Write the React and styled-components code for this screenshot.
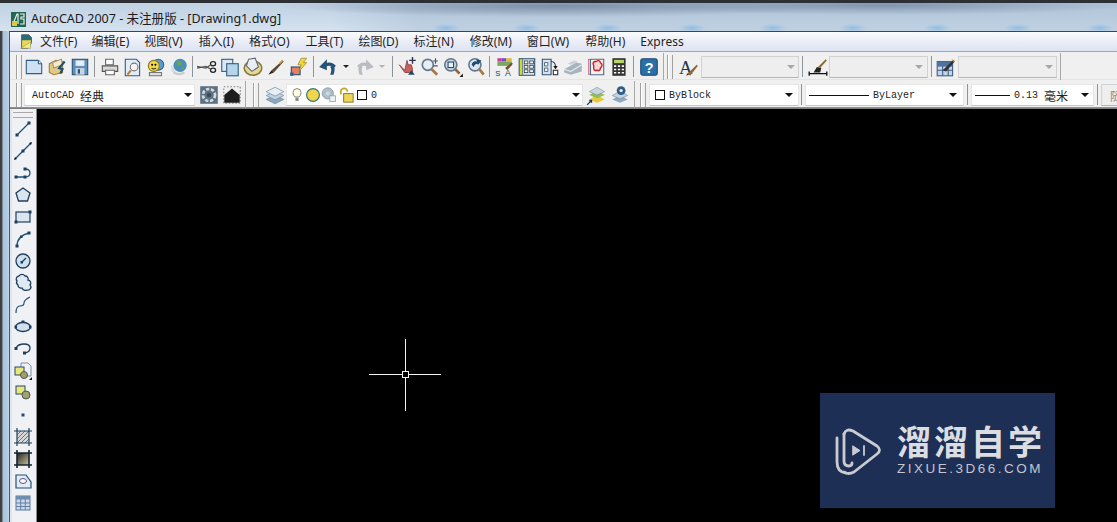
import React from "react";
import styled, { createGlobalStyle } from "styled-components";

const Global = createGlobalStyle`
  html, body { margin: 0; padding: 0; background: #000; overflow: hidden; }
  * { box-sizing: border-box; }
`;

const Window = styled.div`
  width: 1117px; height: 522px; overflow: hidden; display: flex; flex-direction: column;
  background: linear-gradient(90deg, #3a3a3c 0, #4a4a4c 2px, #a9c3dc 3px, #b4cde6 8px, #c3d6e6 9px);
  font-family: "Noto Sans", "Noto Sans CJK SC", sans-serif;
`;
const TitleBar = styled.div`
  height: 31px; flex: none; display: flex; align-items: center; gap: 5px; padding: 4px 0 0 11px;
  border-top: 3px solid #2c2f33;
  background:
    radial-gradient(ellipse 14px 4px at 446px 25px, #8fbde6 0, transparent 100%),
    radial-gradient(ellipse 14px 4px at 527px 25px, #8fbde6 0, transparent 100%),
    radial-gradient(ellipse 14px 4px at 608px 25px, #8fbde6 0, transparent 100%),
    radial-gradient(ellipse 14px 4px at 692px 25px, #8fbde6 0, transparent 100%),
    radial-gradient(ellipse 14px 4px at 773px 25px, #8fbde6 0, transparent 100%),
    radial-gradient(ellipse 14px 4px at 853px 25px, #8fbde6 0, transparent 100%),
    radial-gradient(ellipse 14px 4px at 937px 25px, #8fbde6 0, transparent 100%),
    radial-gradient(ellipse 14px 4px at 1018px 25px, #8fbde6 0, transparent 100%),
    radial-gradient(ellipse 14px 4px at 1100px 25px, #8fbde6 0, transparent 100%),
    radial-gradient(ellipse 280px 11px at 560px 3px, #7b90a9 0, transparent 100%),
    radial-gradient(ellipse 260px 10px at 880px 2px, #7f95ae 0, transparent 100%),
    linear-gradient(90deg, transparent 0, transparent 330px, rgba(150,175,200,.35) 420px, rgba(150,175,200,.35) 100%),
    linear-gradient(180deg, #c0d1e3 0, #c8d8e8 45%, #d6e3ef 100%);
`;
const TitleText = styled.span`
  font-size: 12.55px; color: #1c1c1c; white-space: nowrap; line-height: 1;
`;
const AppLogo = styled.svg`
  width: 15px; height: 15px; flex: none;
`;
const Frame = styled.div`
  margin-left: 9px; flex: 1; min-height: 0; display: flex; flex-direction: column;
  border-left: 1px solid #50565e; border-top: 1px solid #3d4650; background: #f0f0f0;
`;
const MenuBar = styled.div`
  height: 20px; flex: none; display: flex; align-items: center; padding-left: 8px;
  background: linear-gradient(180deg, #fbfcfe 0, #eef1f8 35%, #dde3f2 100%);
  border-bottom: 1px solid #a3a5a8;
`;
const MenuIcon = styled.span`
  width: 18px; height: 19px; display: flex; align-items: center; justify-content: center; flex: none; margin-right: 4px;
`;
const MenuItem = styled.span`
  font-size: 12px; color: #1f1f1f; white-space: nowrap; line-height: 19px; margin-right: ${p => p.$gap}px;
`;
const ToolRow = styled.div`
  height: 28px; flex: none; display: flex; align-items: center; padding: 2px 0 0 6px; background: #f0f0f0;
  border-bottom: 1px solid ${p => p.$dark ? "#8e8e8e" : "#e4e4e4"};
`;
const Grip = styled.span`
  width: 6px; height: 24px; flex: none; margin-left: ${p => p.$ml || 0}px; margin-right: ${p => p.$mr || 0}px;
  border-left: 1px solid #a0a0a0; border-right: 1px solid #a0a0a0;
  background: linear-gradient(90deg, #fff 0 1px, transparent 1px);
`;
const Slot = styled.span`
  width: ${p => p.$w || 23}px; height: 22px; flex: none; display: flex; align-items: center; justify-content: center;
  margin-left: ${p => p.$ml || 0}px;
`;
const Sep = styled.span`
  width: 1px; height: 21px; flex: none; background: #8f9498; margin: 0 ${p => p.$r ?? 3}px 0 ${p => p.$l ?? 3}px;
`;
const BarEnd = styled.span`
  width: 1px; height: 27px; flex: none; background: #a8a8a8; margin-left: ${p => p.$l || 3}px;
`;
const Combo = styled.div`
  width: ${p => p.$w}px; height: 22px; flex: none; display: flex; align-items: center; position: relative;
  background: ${p => p.$off ? "#eeeeee" : "#ffffff"};
  border: 1px solid ${p => p.$off ? "#d2d2d2" : "#e6e6e6"};
  border-bottom: 1px solid ${p => p.$off ? "#b6b6b6" : "#c8c8c8"};
  margin-left: ${p => p.$ml || 0}px;
  font-family: "Liberation Mono", "Noto Sans CJK SC", monospace; font-size: 10px; color: #222;
  padding-left: ${p => p.$pl || 4}px; padding-top: 1px; white-space: nowrap; overflow: hidden;
`;
const ComboArrow = styled.span`
  position: absolute; right: ${p => p.$r ?? 4}px; top: 8px; width: 0; height: 0;
  border-left: 4px solid transparent; border-right: 4px solid transparent;
  border-top: 4px solid ${p => p.$off ? "#a8a8a8" : "#111"};
`;
const SmallArrow = styled.span`
  width: 0; height: 0; border-left: 3px solid transparent; border-right: 3px solid transparent;
  border-top: 3px solid ${p => p.$off ? "#b4b4b4" : "#223"};
`;
const CjkText = styled.span`
  font-family: "Noto Sans CJK SC", sans-serif; font-size: 12px; margin-left: ${p => p.$ml ?? 6}px;
  color: ${p => p.$muted ? "#8a8a8a" : "inherit"};
`;
const LineSample = styled.span`
  width: ${p => p.$w}px; height: 1px; background: #111; flex: none; margin-right: 4px; margin-left: 1px;
`;
const Swatch = styled.span`
  width: 10px; height: 10px; border: 1px solid #111; background: #fff; flex: none; margin-right: ${p => p.$mr ?? 4}px;
  margin-left: ${p => p.$ml || 0}px;
`;
const Workspace = styled.div`
  flex: 1; min-height: 0; display: flex; border-top: 1px solid #7e7e7e; padding-left: 2px; background: #dfe5ec;
`;
const SideBar = styled.div`
  width: 25px; flex: none; display: flex; flex-direction: column; align-items: center; background: #eff1f5;
  padding: 3px 3px 0 0; border-right: 1px solid #8a8a8a;
`;
const SideGrip = styled.span`
  width: 20px; height: 6px; border-top: 1px solid #aaa; border-bottom: 1px solid #aaa; flex: none;
`;
const SideSlot = styled.span`
  width: 20px; height: 22px; flex: none; display: flex; align-items: center; justify-content: center;
`;
const Canvas = styled.div`
  flex: 1; background: #000; position: relative; overflow: hidden;
`;
const Cross = styled.div`
  position: absolute; left: 332px; top: 230px; width: 72px; height: 72px;
`;
const CrossH = styled.span`
  position: absolute; left: 0; right: 0; top: 35px; height: 1px; background: #f4f4f4;
`;
const CrossV = styled.span`
  position: absolute; top: 0; bottom: 0; left: 36px; width: 1px; background: #f4f4f4;
`;
const CrossBox = styled.span`
  position: absolute; left: 33px; top: 32px; width: 7px; height: 7px; border: 1px solid #f4f4f4; background: #000;
`;
const Mark = styled.div`
  position: absolute; left: 783px; top: 284px; width: 235px; height: 115px; background: #1e2f56;
  display: flex; align-items: flex-start; padding: 35px 0 0 14px; color: #d8d9dd;
`;
const MarkLogo = styled.svg`
  width: 47px; height: 48px; flex: none; margin-right: 16px;
`;
const MarkText = styled.div`
  display: flex; flex-direction: column; margin-top: -5px;
`;
const MarkCn = styled.span`
  font-family: "Noto Sans CJK SC", sans-serif; font-weight: 700; font-size: 34px; line-height: 36px;
  letter-spacing: 3px; white-space: nowrap; color: #dcdde0;
`;
const MarkEn = styled.span`
  font-family: "Liberation Sans", sans-serif; font-size: 13.5px; line-height: 15px; letter-spacing: 2.5px; white-space: nowrap; color: #c3c6cf;
  margin-top: 2px;
`;

const B = "#2e5f8a", L = "#cfe0f0", D = "#1d3f5f", K = "#222";
const shapes = {
  fileMenu: <><path d="M4 2h8l3 3v6l-4 6H4z" fill="#e9d94f" stroke="#555"/><path d="M4 2h8l3 3v3H4z" fill="#2c6a78"/><path d="M3 17l11-7v7z" fill="#f3ec7a" stroke="#777" strokeWidth=".5"/></>,
  new: <><path d="M3 4h11l3 3v9H3z" fill={L} stroke={B}/><path d="M14 4v3h3" fill="#fff" stroke={B}/></>,
  open: <><path d="M3 7l6-3 6 1v10l-8 2-4-2z" fill="#e3c884" stroke="#9a8040"/><path d="M6 6l8-3 1 5-8 3z" fill="#f4ead0" stroke="#a89868"/><path d="M17 5l-5 6 3 1-2 4" fill="none" stroke="#1f4f6f" strokeWidth="2"/></>,
  save: <><rect x="3" y="3" width="14" height="14" fill="#5f8fbb" stroke="#2c5478"/><rect x="6" y="4" width="8" height="5" fill="#e8eef5"/><rect x="6" y="11" width="8" height="6" fill="#c8d4e0"/><rect x="8" y="12" width="2" height="4" fill="#2c5478"/></>,
  plot: <><path d="M6 3h7v5H6z" fill="#fff" stroke="#666"/><path d="M3 9h14v5H3z" fill="#d8d8d8" stroke="#555"/><path d="M6 13h8v4H6z" fill="#fff" stroke="#666"/></>,
  preview: <><path d="M3 3h10l3 3v12H3z" fill="#e2ecf6" stroke={B}/><circle cx="11" cy="10" r="3.5" fill="#f4f4f4" stroke="#777"/><path d="M8 13l-3 4" stroke="#b5813e" strokeWidth="2"/></>,
  publish: <><circle cx="12" cy="8" r="5" fill="#5b9bd0" stroke="#2d5f88"/><circle cx="8" cy="9" r="5" fill="#f2d64b" stroke="#8d7a20"/><circle cx="6.5" cy="8" r=".9"/><circle cx="9.5" cy="8" r=".9"/><path d="M6 11q2 1.500 4 0" stroke="#333" fill="none"/><path d="M4 15h11v3H4z" fill="#ddd" stroke="#777"/></>,
  globe: <><path d="M3 9l4-2v9l-4-2z" fill="#d8dde2"/><circle cx="11" cy="8.500" r="6" fill="#4a8fb8"/><path d="M8 4q4 0 5 3-2 3-5 1zM12 11l3-1-1 3z" fill="#6ba54d"/><path d="M5 15q5 3 10 0" stroke="#c6ccd2" strokeWidth="2" fill="none"/></>,
  cut: <><ellipse cx="15.500" cy="7" rx="2.300" ry="1.900" fill="none" stroke={K} strokeWidth="1.200"/><ellipse cx="15.500" cy="13" rx="2.300" ry="1.900" fill="none" stroke={K} strokeWidth="1.200"/><path d="M13.500 8L9 11 1 9.500M13.500 12L9 9.500 1 11" stroke="#555" strokeWidth="1.100" fill="none"/></>,
  copy: <><rect x="2.500" y="3" width="10" height="11" fill="#dbe8f4" stroke={B}/><rect x="7" y="7" width="10.500" height="11" fill="#b9d3ea" stroke={B}/></>,
  paste: <><ellipse cx="10" cy="11" rx="8" ry="6.500" fill="#e6d892" stroke="#85783c" strokeWidth="1.400"/><path d="M6 3l6-1 3 8-6 4-5-5z" fill="#e8eef3" stroke="#667"/></>,
  brush: <><path d="M6 13L16 4l1 1-9 10z" fill="#5b4930"/><path d="M3 17l3-4 2 2z" fill="#222"/><path d="M13 7l3-3" stroke="#d0a040" strokeWidth="1.500"/></>,
  match: <><rect x="3" y="10" width="8" height="7" fill="#e87e62" stroke="#294f70"/><path d="M12 2h5l-3 4h3l-7 8 2-6H9z" fill="#f5d53c" stroke="#8a7a20" strokeWidth=".6"/><rect x="2" y="15" width="3" height="3" fill={B}/></>,
  undo: <><path d="M16 10Q13 6 8 8" fill="none" stroke="#24527a" strokeWidth="3"/><path d="M9 3L2 10l7 3z" fill="#24527a"/><path d="M15 8q2 3 0 9h-3q2-5 0-7z" fill="#24527a"/></>,
  redo: <><path d="M4 10Q7 6 12 8" fill="none" stroke="#b9bcc0" strokeWidth="3"/><path d="M11 3l7 7-7 3z" fill="#b9bcc0"/><path d="M5 8q-2 3 0 9h3q-2-5 0-7z" fill="#b9bcc0"/></>,
  pan: <><path d="M3 8l5 5 2-9 1 4 3 0 1 4v3H8z" fill="#c8605c" stroke="#8b4545" strokeWidth=".8"/><path d="M14 13l3 4h-6z" fill="#1d4a6d"/><path d="M15 1v6M12 4h6" stroke="#335" strokeWidth="1.300"/></>,
  zoomRt: <><circle cx="8" cy="8" r="5" fill="#e8eef4" stroke="#607a92" strokeWidth="1.500"/><path d="M11.500 12l5 5" stroke="#a87a3d" strokeWidth="2.500"/><path d="M15 2v5M12.800 4.500h4.400M13 9h4" stroke="#456" strokeWidth="1"/></>,
  zoomWin: <><circle cx="8" cy="8" r="5.500" fill="#c8d8e6" stroke="#607a92" strokeWidth="1.500"/><rect x="5.500" y="5.500" width="5" height="5" fill="#eaf0f6" stroke="#2a4a6a"/><path d="M12 12l4 4" stroke="#8a6a3d" strokeWidth="2.500"/><path d="M19 16v3h-3z" fill="#111"/></>,
  zoomPrev: <><circle cx="9" cy="8" r="5.500" fill="#dbe6ef" stroke="#607a92" strokeWidth="1.500"/><path d="M6 8q1-4 5-3l-1-2 5 1-3 4-1-1q-2 0-3 3z" fill="#1f4c72"/><path d="M13 12l4 5" stroke="#a87a3d" strokeWidth="2.500"/></>,
  props: <><path d="M4 2h4v3H4z" fill="#c83ca8"/><path d="M8 2h4v3H8z" fill="#7a4bc8"/><path d="M12 2h5v3h-5z" fill="#e0b63c"/><path d="M4 5h13v4H4z" fill="#77a860"/><path d="M11 11l6-5 1 1-5 6z" fill="#7a4a2a"/><text x="2" y="18.500" fontSize="7" fontFamily="Liberation Sans" fill="#333">S</text><text x="11" y="18.500" fontSize="8" fontFamily="Liberation Sans" fill="#345">A</text></>,
  design: <><rect x="3" y="2.500" width="14" height="15" fill="#e8edf2" stroke="#2d5578"/><path d="M3 2.500h3v15H3z" fill="#c9d93f" stroke="#2d5578" strokeWidth=".6"/>{[4.500,8.500,12.500].map(y => <React.Fragment key={y}><rect x="7.500" y={y} width="3.300" height="2.600" fill="#fff" stroke="#345" strokeWidth=".8"/><rect x="12.500" y={y} width="3.300" height="2.600" fill="#fff" stroke="#345" strokeWidth=".8"/></React.Fragment>)}</>,
  palette: <><path d="M3 3h8v14H3z" fill="#d6e3ef" stroke="#2c5478"/><path d="M5 6h3v3H5zM5 11h3v3H5z" fill="#fff" stroke="#345" strokeWidth=".7"/><path d="M11 5q4 0 4 5" stroke="#2a3e55" fill="none"/><path d="M13 9h4l-2 3z" fill="#111"/><rect x="13" y="13" width="4" height="4" fill="#fff" stroke="#333"/></>,
  sheet: <><path d="M2 12l11-6 5 1v7l-10 3-6-2z" fill="#a7b4bd"/><path d="M2 12l6 2 10-6" stroke="#e6edf2" fill="none"/><path d="M5 7l6-3 3 1-5 3z" fill="#c9d2d8"/></>,
  markup: <><rect x="3" y="3" width="2.500" height="14" fill="#f0c6d0" stroke="#c03a50" strokeWidth=".5"/><path d="M5 3h12v14H5z" fill="#fbeef0" stroke="#4e6b8a"/><path d="M8 9q-2-4 2-4 3-2 4 1 3 2 0 5 0 3-3 2-4 1-3-4z" fill="#f5d5d5" stroke="#c9242c" strokeWidth="1.300"/></>,
  calc: <><rect x="4" y="2" width="12" height="16" fill="#333"/><rect x="5.500" y="3.500" width="9" height="3" fill="#b8d86a"/>{[8.500,11.500,14.500].map(y => <path key={y} d={`M5.500 ${y}h2v1.500h-2zM9 ${y}h2v1.500H9zM12.500 ${y}h2v1.500h-2z`} fill="#fff"/>)}</>,
  help: <><rect x="2.500" y="2.500" width="15" height="15" rx="2" fill="#2b6fa8" stroke="#1c4a74"/><text x="10" y="15" fontSize="13" fontWeight="700" textAnchor="middle" fontFamily="Liberation Sans" fill="#fff">?</text></>,
  textStyle: <><text x="1" y="16" fontSize="17" fontFamily="Liberation Serif" fill="#24384c">A</text><path d="M9 16l8-8 1 1-7 9z" fill="#8a6a30"/><path d="M7 18l2-2 1 1z" fill="#222"/></>,
  dimStyle: <><path d="M2 16h16M2 14v4M18 14v4" stroke="#111" strokeWidth="1.200"/><path d="M6 15l3-5 4 1-1 4z" fill="#222"/><path d="M10 10l7-7 1 1-6 7z" fill="#8a6a30"/></>,
  tableStyle: <><rect x="2" y="5" width="14" height="13" fill="#c6d5e6" stroke="#3e5f85"/><path d="M2 9h14M2 13h14M7 5v13M12 5v13" stroke="#3e5f85"/><rect x="2" y="5" width="14" height="4" fill="#4e73a0"/><path d="M7 13l9-9 2 1-8 9z" fill="#333"/><path d="M15 3l3 1-1 2z" fill="#b8873c"/></>,
  gear: <><rect x="2" y="2" width="16" height="16" fill="#5c7282"/><circle cx="10" cy="10" r="5.500" fill="none" stroke="#d4dbe0" strokeWidth="2.400" strokeDasharray="3 1.500"/><circle cx="10" cy="10" r="2" fill="#3a4a58"/></>,
  home: <><rect x="2.500" y="2.500" width="15" height="15" fill="none" stroke="#888" strokeDasharray="1.500 1.500"/><path d="M3 10l7-6 7 6v7H3z" fill="#1d1d1d"/></>,
  layers: <><path d="M2 14l8-4 8 4-8 4z" fill="#8fa9c0" stroke="#68839a" strokeWidth=".6"/><path d="M2 10.500l8-4 8 4-8 4z" fill="#c1d2e0" stroke="#68839a" strokeWidth=".6"/><path d="M2 7l8-4 8 4-8 4z" fill="#e7eef4" stroke="#68839a" strokeWidth=".6"/></>,
  bulb: <><path d="M7.500 12.500Q5 10.500 5 7a5 5 0 0 1 10 0q0 3.500-2.500 5.500z" fill="#fffce6" stroke="#66665a"/><path d="M8 13.500h4v4H8z" fill="#8a8a8a"/></>,
  sun: <circle cx="10" cy="10" r="8" fill="#f1d54a" stroke="#3e7a6e" strokeWidth="1.500"/>,
  vp: <><circle cx="8.500" cy="8" r="7" fill="#aebfca" stroke="#7e96a6"/><circle cx="8.500" cy="8" r="2.500" fill="#d0dce4"/><rect x="11" y="11" width="7" height="7" fill="#edf2f5" stroke="#8a9eae"/></>,
  lock: <><path d="M4 9V6a3.500 3.500 0 0 1 7 0" fill="none" stroke="#c7a327" strokeWidth="1.800"/><rect x="7" y="8" width="10" height="9" fill="#ecd559" stroke="#8a7624"/></>,
  layerMake: <><path d="M3 14l7-4 7 4-7 3z" fill="#e8c93a"/><path d="M3 10l7-4 7 4-7 3z" fill="#8fc050"/><path d="M3 7l7-4 7 4-7 3z" fill="#c8d6e2" stroke="#789" strokeWidth=".5"/><path d="M1 19l4-4M3 15h2v2" stroke="#1d3f5f" strokeWidth="1.200" fill="none"/></>,
  layerPrev: <><path d="M3 14l7-4 7 4-7 3z" fill="#8fa9c0"/><path d="M3 10.500l7-4 7 4-7 3z" fill="#c1d2e0" stroke="#68839a" strokeWidth=".5"/><circle cx="11" cy="6" r="4" fill="#2f5c84"/><circle cx="11" cy="6" r="1.500" fill="#e7eef4"/></>,
  line: <><path d="M4 16L16 4" stroke="#20507a" strokeWidth="1.300"/><rect x="2.500" y="14.500" width="3" height="3" fill={D}/><rect x="14.500" y="2.500" width="3" height="3" fill={D}/></>,
  xline: <><path d="M2 18L18 2" stroke="#20507a" strokeWidth="1.300"/><path d="M1 19l3-1-2-2zM19 1l-3 1 2 2z" fill="#111"/><rect x="8.500" y="8.500" width="3" height="3" fill={D}/></>,
  pline: <><path d="M3 14h9q5 0 5-4t-5-4" fill="none" stroke="#20507a" strokeWidth="1.300"/><rect x="1.500" y="12.500" width="3" height="3" fill={D}/><rect x="10.500" y="12.500" width="3" height="3" fill={D}/><rect x="10.500" y="4.500" width="3" height="3" fill={D}/></>,
  polygon: <path d="M10 3l7 5-2.500 8h-9L3 8z" fill="#dbe5ee" stroke="#1f3e5c" strokeWidth="1.300"/>,
  rect: <><rect x="3" y="5" width="14" height="10" fill="#dbe5ee" stroke="#1f3e5c" strokeWidth="1.200"/><rect x="1.500" y="13.500" width="3" height="3" fill={D}/><rect x="15.500" y="3.500" width="3" height="3" fill={D}/></>,
  arc: <><path d="M4 17Q4 7 16 4" fill="none" stroke="#20507a" strokeWidth="1.300"/><rect x="2.500" y="15.500" width="3" height="3" fill={D}/><rect x="14.500" y="2.500" width="3" height="3" fill={D}/><rect x="7" y="6.500" width="2.500" height="2.500" fill={D}/></>,
  circle: <><circle cx="10" cy="10" r="7" fill="#cfe0ee" stroke="#1f3e5c" strokeWidth="1.300"/><path d="M9 11l4-4" stroke="#1f3e5c" strokeWidth="1.200"/><rect x="7.500" y="10" width="2.500" height="2.500" fill={D}/></>,
  cloud: <path d="M4 8a3 3 0 0 1 2-5 3.500 3.500 0 0 1 6 0 3 3 0 0 1 3 4 3 3 0 0 1 2 5 3 3 0 0 1-3 5 3.500 3.500 0 0 1-5-2 3 3 0 0 1-4-3 3 3 0 0 1-1-4z" fill="#e0e9f2" stroke="#1f3e5c" strokeWidth="1.300"/>,
  spline: <path d="M3 18q0-7 4-7t4-3 6-6" fill="none" stroke="#20507a" strokeWidth="1.200"/>,
  ellipse: <><ellipse cx="10" cy="10" rx="7.500" ry="4.500" fill="#d0e0ef" stroke="#1f3e5c" strokeWidth="1.300"/><rect x="8.500" y="3.500" width="3" height="2.500" fill={D}/><rect x="1.500" y="8.500" width="2.500" height="3" fill={D}/><rect x="16" y="8.500" width="2.500" height="3" fill={D}/></>,
  earc: <><path d="M3 9Q5 5 11 5q6 0 6 4 0 4-5 5" fill="none" stroke="#1f3e5c" strokeWidth="1.300"/><rect x="1.500" y="8" width="3" height="3" fill={D}/><rect x="10" y="12.500" width="3" height="3" fill={D}/></>,
  insert: <><path d="M8 2h7l3 3v10H8z" fill="#eef2f6" stroke="#7c90a2"/><rect x="2" y="6" width="9" height="8" fill="#e8e67c" stroke="#204a6a"/><circle cx="11" cy="14" r="3.500" fill="#9ea26c" stroke="#555"/><path d="M19 16v3h-3z" fill="#111"/></>,
  block: <><rect x="3" y="3" width="9" height="8" fill="#e8e67c" stroke="#204a6a"/><circle cx="13" cy="12" r="4" fill="#9ea26c" stroke="#555"/></>,
  point: <rect x="8.500" y="8.500" width="3" height="3" fill="#20507a"/>,
  hatch: <><rect x="4" y="4" width="12" height="12" fill="#d8d8d8"/><path d="M4 8l4-4M4 12l8-8M4 16l12-12M8 16l8-8M12 16l4-4" stroke="#666" strokeWidth=".9"/><path d="M1 4h18M1 16h18M4 1v18M16 1v18" stroke="#1f3e5c" strokeWidth="1.200"/></>,
  gradient: <><defs><linearGradient id="gr" x1="0" x2="1" y1="0" y2="1"><stop offset="0" stopColor="#222"/><stop offset="1" stopColor="#c8c49a"/></linearGradient></defs><rect x="4" y="4" width="12" height="12" fill="url(#gr)"/><path d="M1 4h18M1 16h18M4 1v18M16 1v18" stroke="#16222e" strokeWidth="1.600"/></>,
  region: <><path d="M3 4h10l5 7v6H3z" fill="#e3ebf3" stroke="#20507a" strokeWidth="1.200"/><ellipse cx="10" cy="10" rx="3.500" ry="2.500" fill="#f6f8fa" stroke="#657"/></>,
  table: <><rect x="3" y="3" width="14" height="14" fill="#cbd8e8" stroke="#5b7ba0"/><rect x="3" y="3" width="14" height="3.500" fill="#6f8db0"/><path d="M3 10h14M3 13.500h14M7.700 6v11M12.300 6v11" stroke="#5b7ba0" strokeWidth=".9"/></>,
  text: <path d="M8 17a2.500 2.500 0 0 1 4 0z" fill="#111"/>,
};

const Icon = ({ name, size = 20 }) => (
  <svg width={size} height={size} viewBox="0 0 20 20" aria-hidden="true">{shapes[name]}</svg>
);
const Tool = ({ name, w, ml }) => <Slot $w={w} $ml={ml}><Icon name={name} size={22} /></Slot>;
const Tools = ({ names }) => names.map(n => <Tool key={n} name={n} />);

const menus = [
  ["文件(F)", 14], ["编辑(E)", 15], ["视图(V)", 16], ["插入(I)", 15], ["格式(O)", 16], ["工具(T)", 15],
  ["绘图(D)", 15], ["标注(N)", 16], ["修改(M)", 15], ["窗口(W)", 16], ["帮助(H)", 15], ["Express", 0],
];
const side = ["line","xline","pline","polygon","rect","arc","circle","cloud","spline","ellipse","earc","insert","block","point","hatch","gradient","region","table","text"];

export default function App() {
  return (
    <Window>
      <Global />
      <TitleBar>
        <AppLogo viewBox="0 0 15 15">
          <rect width="15" height="15" fill="#24664f" />
          <path d="M2 12L6 2h1v10M9 2h4v3h-3v2h3v5H9" fill="none" stroke="#e8f0ea" strokeWidth="1.200" />
          <rect x="1" y="9" width="5" height="5" fill="#d8c84a" />
        </AppLogo>
        <TitleText>AutoCAD 2007 - 未注册版 - [Drawing1.dwg]</TitleText>
      </TitleBar>
      <Frame>
        <MenuBar>
          <MenuIcon><Icon name="fileMenu" size={18} /></MenuIcon>
          {menus.map(([t, g]) => <MenuItem key={t} $gap={g}>{t}</MenuItem>)}
        </MenuBar>
        <ToolRow>
          <Grip />
          <Tools names={["new","open","save"]} />
          <Sep />
          <Tools names={["plot","preview","publish","globe"]} />
          <Sep $l={2} $r={2} />
          <Tools names={["cut","copy","paste","brush","match"]} />
          <Sep $r={2} />
          <Tool name="undo" />
          <Slot $w={14}><SmallArrow /></Slot>
          <Tool name="redo" />
          <Slot $w={12}><SmallArrow $off /></Slot>
          <Sep $l={4} $r={2} />
          <Tools names={["pan","zoomRt","zoomWin","zoomPrev"]} />
          <Sep $l={2} $r={2} />
          <Tools names={["props","design","palette","sheet","markup","calc"]} />
          <Sep />
          <Tool name="help" />
          <BarEnd $l={3} />
          <Grip $ml={3} $mr={4} />
          <Tool name="textStyle" />
          <Combo $off $w={98} $ml={1}><ComboArrow $off $r={3} /></Combo>
          <Sep />
          <Tool name="dimStyle" />
          <Combo $off $w={99}><ComboArrow $off /></Combo>
          <Sep />
          <Tool name="tableStyle" w={22} />
          <Combo $off $w={99} $ml={1}><ComboArrow $off $r={3} /></Combo>
          <BarEnd />
        </ToolRow>
        <ToolRow $dark>
          <Grip $mr={2} />
          <Combo $w={171} $pl={7}>AutoCAD<CjkText>经典</CjkText><ComboArrow $r={2} /></Combo>
          <Tool name="gear" ml={2} />
          <Tool name="home" />
          <BarEnd $l={2} />
          <Grip $ml={7} $mr={4} />
          <Tool name="layers" w={22} ml={1} />
          <Combo $w={297} $pl={2}>
            <Icon name="bulb" size={16} /><Icon name="sun" size={16} /><Icon name="vp" size={16} /><Icon name="lock" size={19} />
            <Swatch $ml={1} $mr={4} />0<ComboArrow $r={2} />
          </Combo>
          <Tool name="layerMake" ml={2} />
          <Tool name="layerPrev" />
          <BarEnd $l={3} />
          <Grip $ml={5} $mr={3} />
          <Combo $w={150} $pl={5}><Swatch />ByBlock<ComboArrow $r={5} /></Combo>
          <Sep $l={2} $r={3} />
          <Combo $w={159} $pl={2}><LineSample $w={60} />ByLayer<ComboArrow $r={6} /></Combo>
          <Sep />
          <Combo $w={123} $pl={2}><LineSample $w={35} />0.13<CjkText>毫米</CjkText><ComboArrow /></Combo>
          <Sep />
          <Combo $off $w={40} $pl={8}><CjkText $ml={0} $muted>随颜色</CjkText></Combo>
        </ToolRow>
        <Workspace>
          <SideBar>
            <SideGrip />
            {side.map(n => <SideSlot key={n}><Icon name={n} /></SideSlot>)}
          </SideBar>
          <Canvas>
            <Cross><CrossH /><CrossV /><CrossBox /></Cross>
            <Mark>
              <MarkLogo viewBox="0 0 47 48" fill="none" stroke="#c9cbd1" strokeLinecap="round" strokeLinejoin="round">
                <path d="M10 6q2-6 9-3L43 18q5 4 0 8L20 44q-6 3-10 0" strokeWidth="2.800" />
                <path d="M3 10v24q0 10 9 11" strokeWidth="2.800" />
                <path d="M10 6V33q0 5 5 5 3 0 3-3" strokeWidth="2.800" />
                <path d="M19 18l7 4.500-7 4.500z" fill="#c9cbd1" strokeWidth="1" />
                <path d="M30 18v9" strokeWidth="1.800" />
              </MarkLogo>
              <MarkText>
                <MarkCn>溜溜自学</MarkCn>
                <MarkEn>ZIXUE.3D66.COM</MarkEn>
              </MarkText>
            </Mark>
          </Canvas>
        </Workspace>
      </Frame>
    </Window>
  );
}
